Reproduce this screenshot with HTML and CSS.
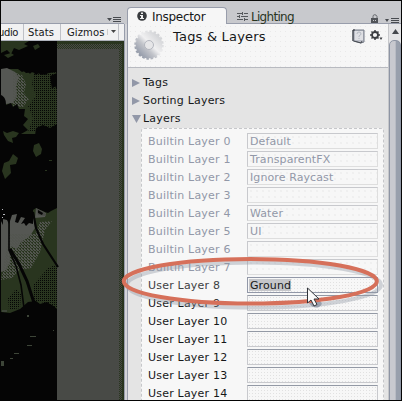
FILE: index.html
```
<!DOCTYPE html>
<html lang="en">
<head>
<meta charset="utf-8">
<title>Tags &amp; Layers</title>
<link rel="stylesheet" href="styles.css">
</head>
<body>
<div class="window">
  <section class="game">
    <div class="pane-top"><svg width="14" height="6" viewBox="0 0 14 6"><path d="M0 1h5L2.500 4zM6 0h8v1H6zM6 2h8v1H6zM6 4h8v1H6z" fill="#484b50"/></svg></div>
    <div class="toolbar">
      <span class="tool audio">udio</span><span class="tool stats">Stats</span><span class="tool gizmos">Gizmos<i></i><svg width="5" height="3"><path d="M0 0h5L2.500 3z" fill="#444"/></svg></span>
    </div>
    <svg class="scene" width="123" height="359" viewBox="1 41 123 359">
      <defs>
        <pattern id="check" width="2" height="2" patternUnits="userSpaceOnUse"><path d="M0 0h1v1H0z" fill="#050505"/></pattern>
        <pattern id="greenDots" width="2" height="2" patternUnits="userSpaceOnUse"><path d="M0 0h1v1H0zM1 1h1v1H1z" fill="#29351f"/></pattern>
        <pattern id="grayDots" width="3" height="3" patternUnits="userSpaceOnUse"><path d="M0 0h2v1H0zM1 1h2v1H1zM0 2h1v1H0z" fill="#52554f"/></pattern>
      </defs>
      <path fill="#484a46" d="M57 41h67v359H57z"/>
      <path fill="#29351f" d="M57 41h67v3H57zM122 41h2v359h-2z"/>
      <path fill="url(#greenDots)" d="M57 44h67v5H57zM119 44h3v356h-3z"/>
      <path fill="#050505" d="M1 41h56v359H1z"/>
      <path fill="#29351f" d="M1 41h28l-5 3 4 2-9 4-5-2-3 6-4-4-6 3zM33 46l5-2 2 3-5 3zM4 55l7-2 3 2-6 3zM1 69h20l5 4 10-1 6 3 7-2 8-1v62H1z"/>
      <path fill="#555753" d="M1 69l6-1 8 4 4 5-3 9 1 9-4 8-7 1-5-4z"/>
      <path fill="url(#grayDots)" d="M13 72l9 3 4 9-2 9 5 6-6 8-10-1z"/>
      <path fill="url(#check)" d="M34 74l23-2v60H28l5-14-5-12 8-10-4-12z"/>
      <path fill="#050505" d="M14 66h43v5l-8 1-4 3-3-4-6 4-4-4-2 3-3-4-5 2zM50 76l7-3v17l-2-4-3 3-1-6z"/>
      <path fill="#050505" d="M1 95c4 2 5 5 5 10l5-2 2 4 4-3 2 5 6 0-1 7 4 3-5 6 5 5-7 4H1z"/>
      <path fill="#050505" d="M36 128l7-3 7 3 7-4v12H35z"/>
      <path fill="#29351f" d="M3 131l4 2 6-2 6 2-3 4-4 1 1 5-5-2-4-6zM34 145l5-2 3 6-1 5-5 3-3-6zM13 154l5 4-2 6-6 1 1 8-6 6-3-8 2-8 5-2zM49 160h3v1h-3zM45 170h2v1h-2z"/>
      <path fill="#29351f" d="M1 208h56v101l-5-4-6-2-8 3-6-2-8 4-6 6-9 2-8-2z"/>
      <path fill="#555753" d="M1 212h8l1 50-4 8-5 2zM10 212h23l2 16-5 8-9 6-4 7-7-3zM36 208l10 5-1 4-10 1z"/>
      <path fill="url(#grayDots)" d="M9 234h26l5-12 12-1-7 9-5 22-9 16-12 2-7 8-11 2z"/>
      <path fill="url(#check)" d="M34 284l14-16 9-4v44l-8-3-10-4-5 5zM16 289l5 5-1 14-11 2-1-12z"/>
      <path fill="#050505" d="M1 202h56v6l-6 3-3 2-3-1-9-4-3 2v14l-4-1-3 3-2-3-3 1 4-6-4-1-3 6-3-1 2-8-5 1-3 9-2-4-4-1v6l-3-6-3-3z"/>
      <path d="M36 208l8 4 2 4-8-1z" fill="#484a46"/><path d="M38 210l5 3-1 2-4-2z" fill="#050505"/>
      <g fill="none" stroke="#050505"><path d="M9 213v37l7 16 5 19 3 23" stroke-width="1.600"/><path d="M10 249l9 15 8 17 8 25" stroke-width="3"/><path d="M33 212l3 16 7 16 15 23" stroke-width="2.200"/></g>
      <path fill="#050505" d="M1 312l9 1 10-4 8-7 8-1 4 3 7-2 10 7v92H1z"/>
      <path fill="#3d4538" d="M2 310h5v2H2zM27 315h2v2h-2zM30 336h6v1h-6zM27 345h5v1h-5zM14 353h5v1h-5zM10 358h3v1h-3zM1 361h3v5H1zM53 330h1v1h-1z"/>
      <path fill="#b5b6bb" d="M2 209h1v1H2zM3 214h2v1H3zM2 217h1v1H2z"/>
    </svg>
  </section>
  <div class="splitter"></div>
  <section class="inspector">
    <div class="tabs">
      <div class="tab"><svg width="10" height="10"><circle cx="5" cy="5" r="4.800" fill="#383b3e"/><path d="M4 1.500h2v1.500H4zM3 4h3v3h1v1H3V7h1V5H3z" fill="#eee"/></svg><span>Inspector</span></div>
      <div class="lighting"><svg width="11" height="11"><path d="M0 2.500h5M7 2.500h4M0 5.500h2M4 5.500h7M0 8.500h6M8 8.500h3M5.500 1v3M2.500 4v3M7.500 7v3" stroke="#55585c" fill="none"/></svg><span>Lighting</span></div>
      <svg class="lock" width="8" height="9"><path d="M2 4V2.500Q2 .7 3.700.7T6 2.500V4" stroke="#66696e" fill="none"/><path d="M0 4h7v5H0z" fill="#515459"/><path d="M2 6h1v1H2zM4 6h1v1H4z" fill="#c8c9cd"/></svg>
      <svg width="14" height="6"><path d="M0 1h4L2 4zM6 0h8v1H6zM6 2h8v1H6zM6 4h8v1H6z" fill="#484b50"/></svg>
    </div>
    <div class="panel">
      <div class="content">
        <header>
          <svg class="gear" width="32" height="32" viewBox="0 0 32 32"><defs><linearGradient id="metal" x1="0" y1="1" x2="1" y2="0"><stop offset=".15" stop-color="#969dab"/><stop offset=".4" stop-color="#c3c5cb"/><stop offset=".55" stop-color="#f0f0f1"/><stop offset="1" stop-color="#c4c6ca"/></linearGradient></defs><circle cx="16" cy="16" r="13.300" fill="url(#metal)"/><circle cx="16" cy="16" r="13.700" fill="none" stroke="url(#metal)" stroke-width="2" stroke-dasharray="2.500 1.800"/><circle cx="16" cy="16" r="4.500" fill="#e6e6e8" stroke="#b3b6be"/></svg>
          <h1>Tags &amp; Layers</h1>
          <svg class="book" width="13" height="15"><path d="M1 1h11v12l-3 1-8-2z" fill="#b9bcc5" stroke="#777d88"/><path d="M1 12V1h2" fill="none" stroke="#303338"/><path d="M3 2h8v9H3z" fill="#dfe0e4"/><path d="M5 5q0-2 2-2t2 2q0 1-2 2v1M7 9v1" stroke="#b4b8c1" fill="none"/><path d="M2 12l7 2 1-2" stroke="#464a50" fill="none"/></svg>
          <svg class="cog" width="13" height="11"><circle cx="5" cy="5" r="3" fill="none" stroke="#3c3e42" stroke-width="1.800"/><path d="M5 0v2M5 8v2M0 5h2M8 5h2M1.500 1.500l1.200 1.200M7.300 7.300l1.200 1.200M8.500 1.500L7.300 2.700M2.700 7.300L1.500 8.500" stroke="#3c3e42" stroke-width="1.500"/><path d="M9.500 7.500h3L11 10z" fill="#3c3e42"/></svg>
        </header>
        <div class="fold"><svg width="8" height="8"><path d="M0 0l8 4-8 4z"/></svg>Tags</div>
        <div class="fold"><svg width="8" height="8"><path d="M0 0l8 4-8 4z"/></svg>Sorting Layers</div>
        <div class="fold open"><svg width="9" height="8"><path d="M0 0h9L4.500 8z"/></svg>Layers</div>
        <div class="layers">
          <div class="row off"><label>Builtin Layer 0</label><div class="field">Default</div></div>
          <div class="row off"><label>Builtin Layer 1</label><div class="field">TransparentFX</div></div>
          <div class="row off"><label>Builtin Layer 2</label><div class="field">Ignore Raycast</div></div>
          <div class="row off"><label>Builtin Layer 3</label><div class="field"></div></div>
          <div class="row off"><label>Builtin Layer 4</label><div class="field">Water</div></div>
          <div class="row off"><label>Builtin Layer 5</label><div class="field">UI</div></div>
          <div class="row off"><label>Builtin Layer 6</label><div class="field"></div></div>
          <div class="row off"><label>Builtin Layer 7</label><div class="field"></div></div>
          <div class="row active"><label>User Layer 8</label><div class="field"><mark>Ground</mark></div></div>
          <div class="row"><label>User Layer 9</label><div class="field"></div></div>
          <div class="row"><label>User Layer 10</label><div class="field"></div></div>
          <div class="row"><label>User Layer 11</label><div class="field"></div></div>
          <div class="row"><label>User Layer 12</label><div class="field"></div></div>
          <div class="row"><label>User Layer 13</label><div class="field"></div></div>
          <div class="row"><label>User Layer 14</label><div class="field"></div></div>
        </div>
      </div>
      <div class="scrollbar"><svg width="7" height="5"><path d="M0 5l3.500-5L7 5z" fill="#45484d"/></svg><div class="thumb"></div></div>
    </div>
  </section>
  <svg class="overlay" width="402" height="401">
    <ellipse cx="254" cy="285" rx="127" ry="22.500" fill="none" stroke="#9298a4" stroke-opacity=".4" stroke-width="4"/>
    <path d="M309 303q6-5 11-2 4 3-1 6-6 2-10-4" fill="#9aa0ad"/>
    <ellipse cx="250.300" cy="281.300" rx="126.500" ry="22.300" fill="none" stroke="#d6705a" stroke-width="4"/>
    <path d="M307.500 288v15l3.500-3 3 6 3-1.500-3-5.500h5z" fill="#fafafa" stroke="#303338"/>
  </svg>
</div>
</body>
</html>
```
FILE: styles.css
```
* { box-sizing: border-box; }
body { margin: 0; overflow: hidden; background: #050505; }
svg { display: block; flex: none; }
.window {
  position: relative; display: flex; width: 402px; height: 401px; overflow: hidden;
  border: 1px solid #050505; background: #c8c9cd; color: #161819;
  font: 11px/18px "DejaVu Sans", sans-serif; letter-spacing: .1px;
}
.game { width: 123px; flex: none; }
.pane-top { height: 23px; display: flex; justify-content: flex-end; padding: 16px 3px 0 0; border-bottom: 1px solid #989dab; }
.toolbar { height: 17px; display: flex; background: #f1f1f2; border-bottom: 1px solid #aeb2bb; font-size: 10px; line-height: 18px; overflow: hidden; }
.tool { height: 16px; border-right: 1px solid #bfc1c7; }
.audio { width: 23px; display: flex; justify-content: flex-end; padding-right: 5px; letter-spacing: -.4px; }
.stats { width: 37px; padding-left: 4px; }
.gizmos { width: 58px; padding-left: 6px; display: flex; line-height: 18px; }
.gizmos i { width: 1px; height: 6px; margin: 5px 3px 0 3px; background: #ccc; }
.gizmos svg { margin-top: 6px; }
.splitter { width: 3px; flex: none; margin-top: 23px; border-left: 1px solid #989dab; background: #d3d4d9; }
.inspector { flex: 1; min-width: 0; display: flex; flex-direction: column; }
.tabs { height: 23px; flex: none; display: flex; border-bottom: 1px solid #989dab; }
.tab { width: 100px; height: 17px; margin-top: 6px; display: flex; align-items: center; padding-left: 9px; gap: 5px; background: #f6f6f6; border: 1px solid #989dab; border-bottom: 0; border-radius: 4px 4px 0 0; font-size: 12px; letter-spacing: -.3px; }
.tab svg { margin-top: -1px; }
.tab span { margin-top: 2px; }
.lighting { display: flex; padding: 7px 0 0 10px; gap: 3px; width: 144px; font-size: 12px; letter-spacing: -.7px; color: #29351f; }
.lighting svg { margin-top: 3px; }
.lock { margin: 13px 6px 0 0; }
.lock + svg { margin-top: 17px; }
.panel { flex: 1; min-height: 0; display: flex; border-left: 1px solid #989dab; }
.content { width: 260px; flex: none; overflow: hidden; background: #e4e4e4; }
header { display: flex; height: 44px; margin-bottom: 6px; padding-left: 5px; background: radial-gradient(circle, #e9e9e9 .5px, transparent .8px) 0 0 / 5px 5px #f6f6f6; border-bottom: 1px solid #b8bac0; }
.gear { margin: 5px 0 0 0; }
h1 { width: 179px; margin: 4px 0 0 8px; font-size: 13px; line-height: 18px; font-weight: 400; letter-spacing: .2px; }
.book { margin: 5px 0 0 0; }
.cog { margin: 6px 0 0 5px; }
.fold { display: flex; align-items: center; height: 18px; padding-left: 4px; gap: 3px; letter-spacing: .2px; }
.fold svg { fill: #9298a8; }
.open { gap: 2px; }
.layers { width: 243px; height: 280px; margin: 0 0 0 13px; padding: 4px 5px 0 6px; background: #f7f7f7; border: 1px dashed #c6c7ca; border-radius: 3px; }
.row { display: flex; height: 18px; }
label { width: 99px; flex: none; white-space: nowrap; letter-spacing: .2px; }
.off { color: #9298a8; }
.field { width: 131px; height: 16px; padding-left: 2px; line-height: 16px; border: 1px solid #c8c9cd; border-top-color: #9399a5; background: radial-gradient(circle, #e1e1e1 .5px, transparent .8px) 0 0 / 3px 3px #f7f7f7; }
.off .field { border-color: #c8c9cd #dedede #dedede #c8c9cd; background-size: 6px 6px; }
.active label { color: #3e4143; }
.active .field { border-color: #9298a8; padding-left: 1px; }
mark { display: inline-block; height: 12px; line-height: 13px; margin-top: 1px; padding-left: 1px; background: #c5c6ca; color: inherit; vertical-align: top; }
.scrollbar { flex: 1; background: #e4e4e6; border-left: 1px solid #c6c7ca; }
.scrollbar svg { margin: 5px 0 0 3px; }
.thumb { height: 370px; margin-top: 6px; border: 1px solid #8e95a4; border-radius: 5px; background: linear-gradient(90deg, #c8c9cf 50%, #989fac 65%); }
.overlay { position: absolute; left: -1px; top: -1px; }
```
